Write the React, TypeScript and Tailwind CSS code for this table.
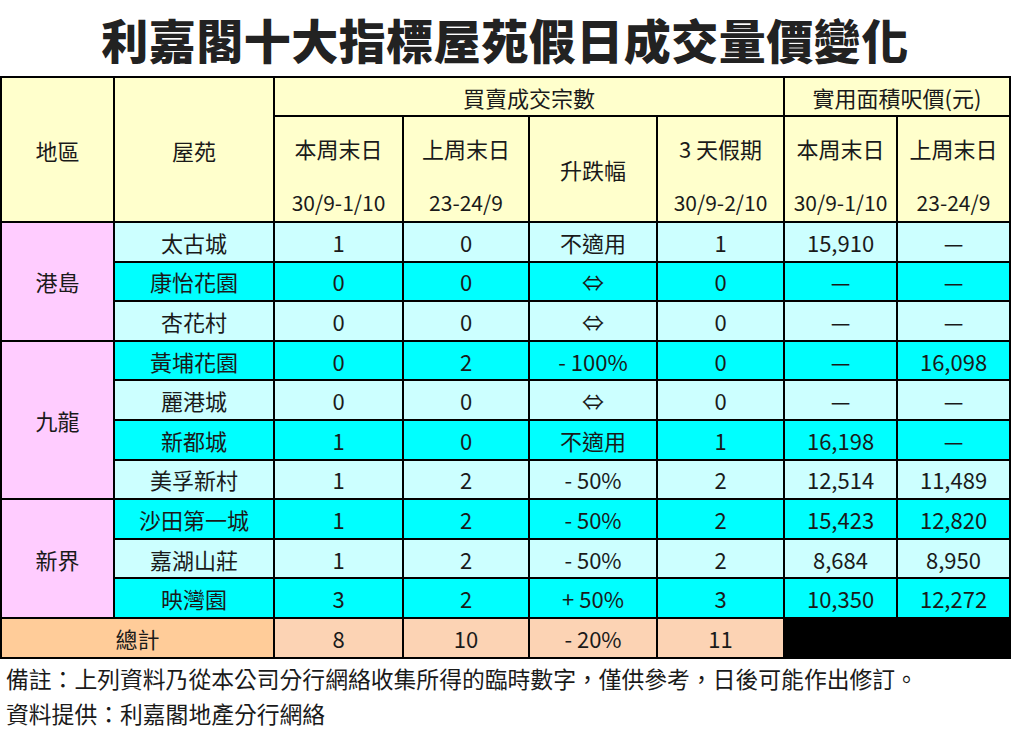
import React from 'react';

type Row = {
  estate: string;
  cur: string;
  prev: string;
  change: string;
  holiday: string;
  priceCur: string;
  pricePrev: string;
};

const regions: { name: string; rows: Row[] }[] = [
  {
    name: '港島',
    rows: [
      { estate: '太古城', cur: '1', prev: '0', change: '不適用', holiday: '1', priceCur: '15,910', pricePrev: '—' },
      { estate: '康怡花園', cur: '0', prev: '0', change: '⇔', holiday: '0', priceCur: '—', pricePrev: '—' },
      { estate: '杏花村', cur: '0', prev: '0', change: '⇔', holiday: '0', priceCur: '—', pricePrev: '—' },
    ],
  },
  {
    name: '九龍',
    rows: [
      { estate: '黃埔花園', cur: '0', prev: '2', change: '- 100%', holiday: '0', priceCur: '—', pricePrev: '16,098' },
      { estate: '麗港城', cur: '0', prev: '0', change: '⇔', holiday: '0', priceCur: '—', pricePrev: '—' },
      { estate: '新都城', cur: '1', prev: '0', change: '不適用', holiday: '1', priceCur: '16,198', pricePrev: '—' },
      { estate: '美孚新村', cur: '1', prev: '2', change: '- 50%', holiday: '2', priceCur: '12,514', pricePrev: '11,489' },
    ],
  },
  {
    name: '新界',
    rows: [
      { estate: '沙田第一城', cur: '1', prev: '2', change: '- 50%', holiday: '2', priceCur: '15,423', pricePrev: '12,820' },
      { estate: '嘉湖山莊', cur: '1', prev: '2', change: '- 50%', holiday: '2', priceCur: '8,684', pricePrev: '8,950' },
      { estate: '映灣園', cur: '3', prev: '2', change: '+ 50%', holiday: '3', priceCur: '10,350', pricePrev: '12,272' },
    ],
  },
];

const cell = 'border-2 border-black text-center align-middle p-0';

export default function App() {
  let rowIndex = 0;

  return (
    <div
      className="w-[1014px] h-[735px] bg-white text-[#1a1a1a] overflow-hidden"
      style={{ fontFamily: '"Noto Sans CJK TC", "Noto Sans", sans-serif' }}
    >
      {/* Title */}
      <h1 className="h-[76px] flex items-center justify-center text-[47px] font-black leading-none tracking-[0.5px] text-[#222] pr-[4px]">
        利嘉閣十大指標屋苑假日成交量價變化
      </h1>

      {/* Table */}
      <table className="table-fixed border-collapse w-[1009px] text-[22px] leading-none">
        <colgroup>
          <col className="w-[113px]" />
          <col className="w-[160px]" />
          <col className="w-[129px]" />
          <col className="w-[126px]" />
          <col className="w-[128px]" />
          <col className="w-[127px]" />
          <col className="w-[113px]" />
          <col className="w-[113px]" />
        </colgroup>
        <thead>
          <tr className="h-[39px] bg-[#ffffcc]">
            <th rowSpan={2} className={`${cell} font-normal`}>地區</th>
            <th rowSpan={2} className={`${cell} font-normal`}>屋苑</th>
            <th colSpan={4} className={`${cell} font-normal`}>買賣成交宗數</th>
            <th colSpan={2} className={`${cell} font-normal`}>實用面積呎價(元)</th>
          </tr>
          <tr className="h-[104px] bg-[#ffffcc]">
            {[
              ['本周末日', '30/9-1/10'],
              ['上周末日', '23-24/9'],
            ].map(([a, b]) => (
              <th key={a} className={`${cell} font-normal`}>
                <div className="flex flex-col items-center justify-between h-[104px] pt-[20px] pb-[8px]">
                  <span>{a}</span>
                  <span className="text-[21px]">{b}</span>
                </div>
              </th>
            ))}
            <th className={`${cell} font-normal`}>升跌幅</th>
            {[
              ['3 天假期', '30/9-2/10'],
              ['本周末日', '30/9-1/10'],
              ['上周末日', '23-24/9'],
            ].map(([a, b], i) => (
              <th key={i} className={`${cell} font-normal`}>
                <div className="flex flex-col items-center justify-between h-[104px] pt-[20px] pb-[8px]">
                  <span>{a}</span>
                  <span className="text-[21px]">{b}</span>
                </div>
              </th>
            ))}
          </tr>
        </thead>
        <tbody>
          {regions.map((region) =>
            region.rows.map((r, i) => {
              const bg = rowIndex++ % 2 === 0 ? 'bg-[#ccffff]' : 'bg-[#00ffff]';
              return (
                <tr key={r.estate} className={`h-[39.6px] ${bg}`}>
                  {i === 0 && (
                    <td rowSpan={region.rows.length} className={`${cell} bg-[#ffccff]`}>
                      {region.name}
                    </td>
                  )}
                  <td className={cell}>{r.estate}</td>
                  <td className={cell}>{r.cur}</td>
                  <td className={cell}>{r.prev}</td>
                  <td className={cell}>{r.change}</td>
                  <td className={cell}>{r.holiday}</td>
                  <td className={cell}>{r.priceCur}</td>
                  <td className={cell}>{r.pricePrev}</td>
                </tr>
              );
            })
          )}
          <tr className="h-[39.6px] bg-[#fcd3b4]">
            <td colSpan={2} className={`${cell} bg-[#ffcc99]`}>總計</td>
            <td className={cell}>8</td>
            <td className={cell}>10</td>
            <td className={cell}>- 20%</td>
            <td className={cell}>11</td>
            <td colSpan={2} className={`${cell} bg-black`}></td>
          </tr>
        </tbody>
      </table>

      {/* Notes */}
      <div className="pl-[6px] pt-[2px] text-[22.8px] leading-[35px] whitespace-nowrap">
        <p>備註：上列資料乃從本公司分行網絡收集所得的臨時數字，僅供參考，日後可能作出修訂。</p>
        <p>資料提供：利嘉閣地產分行網絡</p>
      </div>
    </div>
  );
}
